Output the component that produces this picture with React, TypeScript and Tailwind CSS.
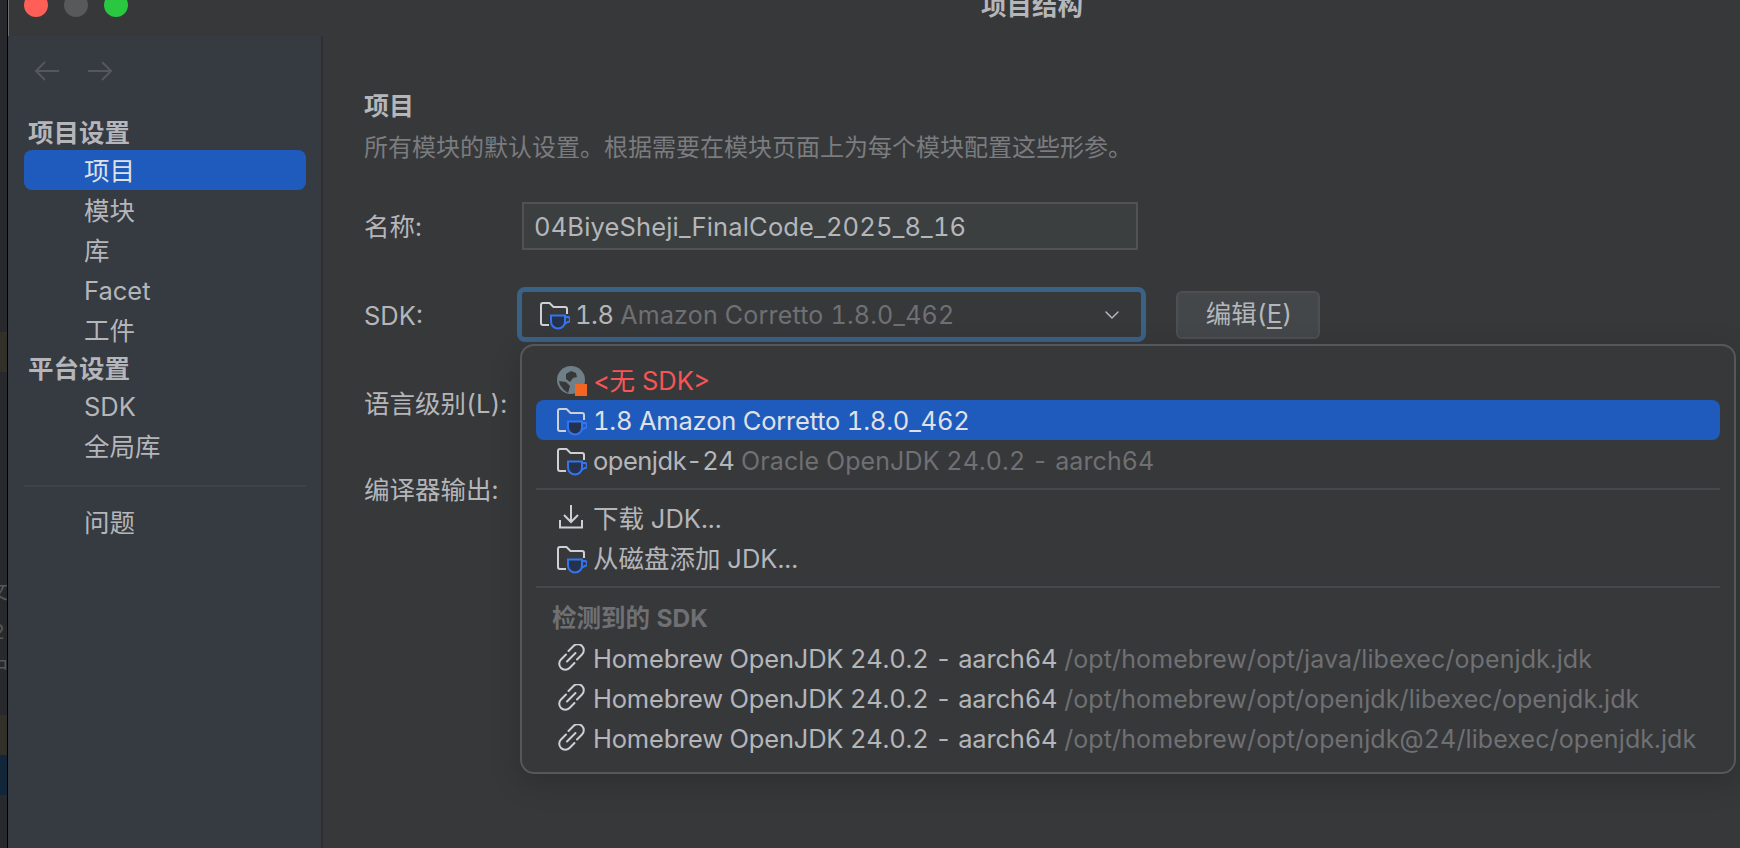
import type { ReactNode } from "react";
import { ChevronDown } from "lucide-react";

const FONT = "font-['Inter','Noto_Sans_CJK_SC',sans-serif] tabular-nums";

function FolderCup() {
	return (
		<svg width="30" height="30" viewBox="0 0 30 30" fill="none" className="shrink-0">
			<path
				d="M9 25H3a2 2 0 0 1-2-2V5a2 2 0 0 1 2-2h6.5l4 4H25a2 2 0 0 1 2 2v5"
				stroke="#ced0d6"
				strokeWidth="2"
			/>
			<path d="M11 15.5h14v6a7 7 0 0 1-7 7 7 7 0 0 1-7-7z" fill="#25324d" stroke="#3574f0" strokeWidth="2" />
			<path d="M25 17h2a2.5 2.5 0 0 1 1 5l-3.5 2" stroke="#3574f0" strokeWidth="2" />
		</svg>
	);
}

function GlobeMissing() {
	return (
		<svg width="30" height="30" viewBox="0 0 30 30" fill="none" className="shrink-0">
			<circle cx="14" cy="14" r="14" fill="#6e7f88" />
			<path d="M9 8l5-3 5 2 1 4-4 1-3 4-4-3z" fill="#37383a" />
			<path d="M2 15l7 1 4 4-2 7-4-3-4-5z" fill="#37383a" />
			<rect x="18" y="18" width="12" height="12" fill="#f26522" />
		</svg>
	);
}

function DownloadIcon() {
	return (
		<svg width="30" height="30" viewBox="0 0 30 30" fill="none" className="shrink-0">
			<path d="M14 1v17M7 11l7 7 7-7" stroke="#ced0d6" strokeWidth="2" />
			<path d="M3 16v7.5h22V16" stroke="#ced0d6" strokeWidth="2" />
		</svg>
	);
}

function LinkIcon() {
	return (
		<svg width="30" height="30" viewBox="0 0 30 30" fill="none" className="shrink-0">
			<path d="M11.5 7l5-5a6 6 0 0 1 8.5 8.5l-5 5" stroke="#ced0d6" strokeWidth="2" strokeLinecap="round" />
			<path d="M9 10.5l-5 5a6 6 0 0 0 8.5 8.5l5-5" stroke="#ced0d6" strokeWidth="2" strokeLinecap="round" />
			<path d="M10 17.5L18.5 9" stroke="#ced0d6" strokeWidth="2" strokeLinecap="round" />
		</svg>
	);
}

function SideItem({ label, active }: { label: string; active?: boolean }) {
	return (
		<div
			className={`h-10 ml-[15px] w-[282px] rounded-lg pl-[60px] pt-[3px] flex items-center text-[25.5px] ${
				active ? "bg-[#1f5bbd] text-[#dfe1e5]" : "text-[#b4b6ba]"
			}`}
		>
			{label}
		</div>
	);
}

function Row({ icon, children, active }: { icon: ReactNode; children: ReactNode; active?: boolean }) {
	return (
		<div
			className={`h-10 rounded-lg pl-[21px] pt-[2px] flex items-center gap-[6px] text-[25.5px] whitespace-nowrap ${
				active ? "bg-[#1f5bbd] text-[#dfe1e5]" : "text-[#b4b6ba]"
			}`}
		>
			{icon}
			<span>{children}</span>
		</div>
	);
}

function Hint({ children }: { children: ReactNode }) {
	return <span className="text-[25px] tracking-[0.1px] text-[#6f7073]"> {children}</span>;
}

function FieldLabel({ children }: { children: ReactNode }) {
	return <div className="w-[158px] shrink-0 pt-[2px] text-[25.5px] text-[#b4b6ba]">{children}</div>;
}

function HomebrewRow({ path }: { path: string }) {
	return (
		<Row icon={<LinkIcon />}>
			<span className="tracking-[-0.2px]">Homebrew OpenJDK 24.0.2 - aarch64</span>
			<Hint>{path}</Hint>
		</Row>
	);
}

export default function App() {
	return (
		<div className={`h-[848px] w-[1740px] overflow-hidden flex bg-[#2b2c2e] ${FONT}`}>
			{/* Sliver of the window behind */}
			<div className="w-2 shrink-0 border-r border-black bg-[#27292c] flex flex-col overflow-hidden text-[20px] leading-5 text-[#55575a]">
				<div className="h-[332px]" />
				<div className="h-10 bg-[#33302a]" />
				<div className="h-[210px]" />
				<div className="h-5 -ml-3">文</div>
				<div className="h-[30px] -ml-2 pt-[20px]">2</div>
				<div className="h-5 mt-[25px] -ml-3">中</div>
				<div className="h-[38px]" />
				<div className="h-10 bg-[#33302a]" />
				<div className="h-10 bg-[#12263a]" />
			</div>

			{/* Dialog */}
			<div className="flex-1 min-w-0 flex flex-col bg-[#37383a] border-l border-[#6c6e72]">
				{/* Title bar */}
				<div className="h-9 shrink-0 relative">
					<div className="absolute left-[15px] -top-[7px] flex gap-4">
						<div className="w-6 h-6 rounded-full bg-[#ff5f57]" />
						<div className="w-6 h-6 rounded-full bg-[#58595b]" />
						<div className="w-6 h-6 rounded-full bg-[#2ac840]" />
					</div>
					<div className="absolute left-[972px] -top-[10px] text-[25.5px] leading-8 font-bold text-[#b4b6ba]">项目结构</div>
				</div>

				<div className="flex-1 min-h-0 flex">
					{/* Sidebar */}
					<div className="w-[312px] shrink-0 bg-[#363a41] border-r-2 border-[#2e2f31] -ml-px box-content pl-px">
						<div className="h-[78px] flex items-start gap-[29px] pl-[26px] pt-[25px] text-[#55575a]">
							<svg width="24" height="20" viewBox="0 0 24 20" fill="none" stroke="currentColor" strokeWidth="2">
								<path d="M24 10H1M10 1l-9 9 9 9" />
							</svg>
							<svg width="24" height="20" viewBox="0 0 24 20" fill="none" stroke="currentColor" strokeWidth="2">
								<path d="M0 10h23M14 1l9 9-9 9" />
							</svg>
						</div>
						<div className="h-9 pl-[19px] pt-[3px] flex items-center text-[25.5px] font-bold text-[#b4b6ba]">项目设置</div>
						<SideItem label="项目" active />
						<SideItem label="模块" />
						<SideItem label="库" />
						<SideItem label="Facet" />
						<SideItem label="工件" />
						<div className="h-9 pl-[19px] pt-[3px] flex items-center text-[25.5px] font-bold text-[#b4b6ba]">平台设置</div>
						<SideItem label="SDK" />
						<SideItem label="全局库" />
						<div className="ml-[15px] mt-[19px] h-0.5 w-[282px] bg-[#404245]" />
						<div className="mt-[15px]">
							<SideItem label="问题" />
						</div>
					</div>

					{/* Content */}
					<div className="flex-1 min-w-0 relative pl-[41px] pt-[54px]">
						<div className="text-[25px] leading-8 font-bold text-[#b4b6ba]">项目</div>
						<div className="mt-[10px] text-[24px] leading-8 text-[#7b7c7f]">
							所有模块的默认设置。根据需要在模块页面上为每个模块配置这些形参。
						</div>

						<div className="mt-[38px] flex items-center">
							<FieldLabel>名称:</FieldLabel>
							<div className="w-[616px] h-12 px-[10px] pt-[2px] flex items-center bg-[#3b3f40] border-2 border-[#505254] text-[25.5px] tracking-[0.15px] text-[#b4b6ba] whitespace-nowrap">
								04BiyeSheji_FinalCode_2025_8_16
							</div>
						</div>

						<div className="mt-[37px] flex items-center">
							<div className="pt-[2px]">
								<FieldLabel>SDK:</FieldLabel>
							</div>
							<div className="-ml-[5px] w-[629px] h-[55px] pl-[18px] pr-[17px] flex items-center gap-[5px] rounded-lg bg-[#37383a] border-[5px] border-[#3a6186] text-[25.5px] text-[#b4b6ba] whitespace-nowrap">
								<FolderCup />
								<span className="pt-[2px]">
									<span className="tracking-[-0.5px]">1.8</span>
									<span className="text-[25px] tracking-[0.2px] text-[#6f7073]"> Amazon Corretto 1.8.0_462</span>
								</span>
								<ChevronDown className="ml-auto w-6 h-6 text-[#b4b6ba]" strokeWidth={1.5} />
							</div>
							<div className="ml-[30px] w-[144px] h-12 pl-[2px] rounded-md flex items-center justify-center bg-[#43474a] border-2 border-[#4d4f52] text-[25.5px] text-[#b4b6ba]">
								编辑(<span className="underline underline-offset-4">E</span>)
							</div>
						</div>

						<div className="mt-[41px]">
							<FieldLabel>
								<span className="whitespace-nowrap">语言级别(L):</span>
							</FieldLabel>
						</div>
						<div className="mt-[46px]">
							<FieldLabel>
								<span className="whitespace-nowrap">编译器输出:</span>
							</FieldLabel>
						</div>

						{/* SDK dropdown */}
						<div className="absolute left-[197px] top-[308px] w-[1216px] h-[430px] rounded-[14px] border-2 border-[#555759] bg-[#37383a] px-[14px] pt-[14px] shadow-[0_8px_30px_rgba(0,0,0,0.18)]">
							<Row icon={<GlobeMissing />}>
								<span className="text-[#f75555]">&lt;无 SDK&gt;</span>
							</Row>
							<Row icon={<FolderCup />} active>
								<span className="tracking-[-0.2px]">1.8 Amazon Corretto 1.8.0_462</span>
							</Row>
							<Row icon={<FolderCup />}>
								<span className="tracking-[-0.5px]">openjdk-24</span>
								<Hint>Oracle OpenJDK 24.0.2 - aarch64</Hint>
							</Row>
							<div className="mt-[8px] mb-[8px] h-0.5 bg-[#46484b]" />
							<Row icon={<DownloadIcon />}>下载 JDK...</Row>
							<Row icon={<FolderCup />}>从磁盘添加 JDK...</Row>
							<div className="mt-[8px] mb-[10px] h-0.5 bg-[#46484b]" />
							<div className="h-10 pl-[16px] flex items-center text-[24.5px] font-bold text-[#6f7073] whitespace-nowrap">检测到的 SDK</div>
							<HomebrewRow path="/opt/homebrew/opt/java/libexec/openjdk.jdk" />
							<HomebrewRow path="/opt/homebrew/opt/openjdk/libexec/openjdk.jdk" />
							<HomebrewRow path="/opt/homebrew/opt/openjdk@24/libexec/openjdk.jdk" />
						</div>
					</div>
				</div>
			</div>
		</div>
	);
}
